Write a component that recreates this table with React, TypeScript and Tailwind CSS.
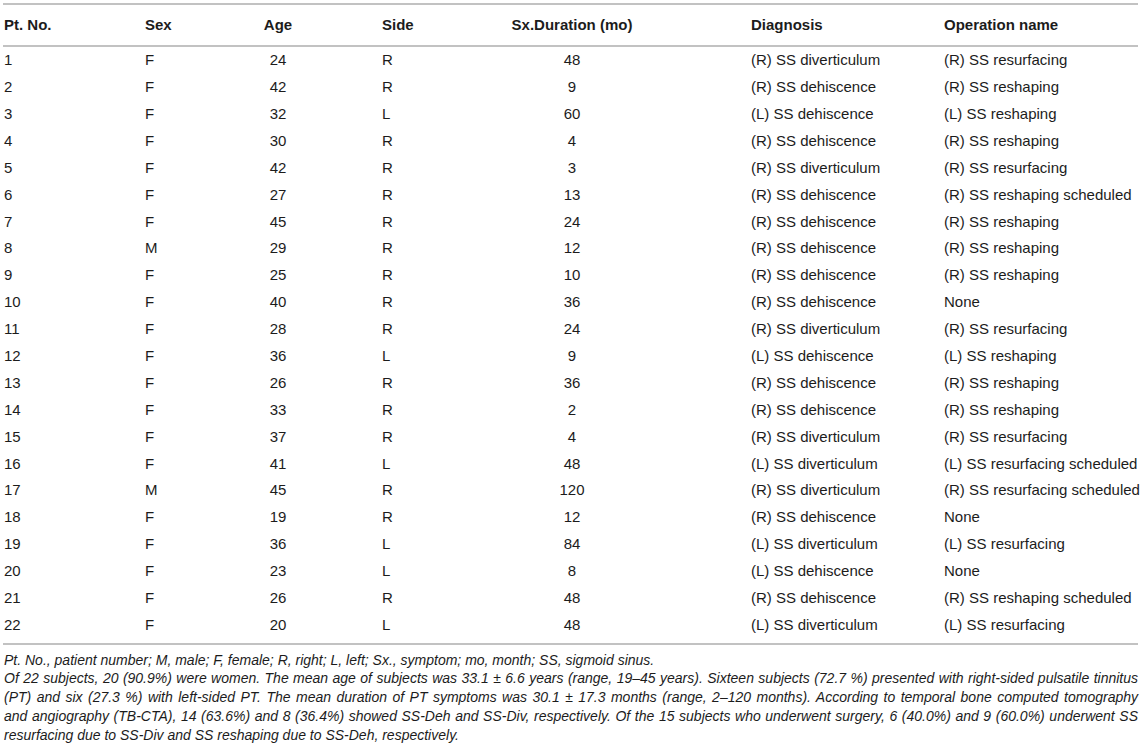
const rows: [string, string, string, string, string, string, string][] = [
  ["1", "F", "24", "R", "48", "(R) SS diverticulum", "(R) SS resurfacing"],
  ["2", "F", "42", "R", "9", "(R) SS dehiscence", "(R) SS reshaping"],
  ["3", "F", "32", "L", "60", "(L) SS dehiscence", "(L) SS reshaping"],
  ["4", "F", "30", "R", "4", "(R) SS dehiscence", "(R) SS reshaping"],
  ["5", "F", "42", "R", "3", "(R) SS diverticulum", "(R) SS resurfacing"],
  ["6", "F", "27", "R", "13", "(R) SS dehiscence", "(R) SS reshaping scheduled"],
  ["7", "F", "45", "R", "24", "(R) SS dehiscence", "(R) SS reshaping"],
  ["8", "M", "29", "R", "12", "(R) SS dehiscence", "(R) SS reshaping"],
  ["9", "F", "25", "R", "10", "(R) SS dehiscence", "(R) SS reshaping"],
  ["10", "F", "40", "R", "36", "(R) SS dehiscence", "None"],
  ["11", "F", "28", "R", "24", "(R) SS diverticulum", "(R) SS resurfacing"],
  ["12", "F", "36", "L", "9", "(L) SS dehiscence", "(L) SS reshaping"],
  ["13", "F", "26", "R", "36", "(R) SS dehiscence", "(R) SS reshaping"],
  ["14", "F", "33", "R", "2", "(R) SS dehiscence", "(R) SS reshaping"],
  ["15", "F", "37", "R", "4", "(R) SS diverticulum", "(R) SS resurfacing"],
  ["16", "F", "41", "L", "48", "(L) SS diverticulum", "(L) SS resurfacing scheduled"],
  ["17", "M", "45", "R", "120", "(R) SS diverticulum", "(R) SS resurfacing scheduled"],
  ["18", "F", "19", "R", "12", "(R) SS dehiscence", "None"],
  ["19", "F", "36", "L", "84", "(L) SS diverticulum", "(L) SS resurfacing"],
  ["20", "F", "23", "L", "8", "(L) SS dehiscence", "None"],
  ["21", "F", "26", "R", "48", "(R) SS dehiscence", "(R) SS reshaping scheduled"],
  ["22", "F", "20", "L", "48", "(L) SS diverticulum", "(L) SS resurfacing"],
];

// footnote lines as they break in the source
const noteLines = [
  "Of 22 subjects, 20 (90.9%) were women. The mean age of subjects was 33.1 ± 6.6 years (range, 19–45 years). Sixteen subjects (72.7 %) presented with right-sided pulsatile tinnitus",
  "(PT) and six (27.3 %) with left-sided PT. The mean duration of PT symptoms was 30.1 ± 17.3 months (range, 2–120 months). According to temporal bone computed tomography",
  "and angiography (TB-CTA), 14 (63.6%) and 8 (36.4%) showed SS-Deh and SS-Div, respectively. Of the 15 subjects who underwent surgery, 6 (40.0%) and 9 (60.0%) underwent SS",
];

const cols = "grid grid-cols-[142px_29px_208px_32px_316px_214px_1fr] items-center";

const Row = ({ cells, head }: { cells: string[]; head?: boolean }) => (
  <div className={`${cols} ${head ? "h-[40px] font-bold" : "h-[26.9px]"} whitespace-nowrap`}>
    <div className="pl-px">{cells[0]}</div>
    <div>{cells[1]}</div>
    <div className="text-center">{cells[2]}</div>
    <div>{cells[3]}</div>
    <div className="text-center">{cells[4]}</div>
    <div className="pl-[21px]">{cells[5]}</div>
    <div>{cells[6]}</div>
  </div>
);

export default function App() {
  return (
    <div className="w-[1145px] h-[753px] bg-white px-[3px] pt-[3px] text-[#1c1c1c] font-['Liberation_Sans',Arial,sans-serif] overflow-hidden">
      <div className="w-[1135px] text-[15px]">
        <div className="border-t-2 border-b-2 border-[#c2c2c2]">
          <Row head cells={["Pt. No.", "Sex", "Age", "Side", "Sx.Duration (mo)", "Diagnosis", "Operation name"]} />
        </div>
        <div className="pb-[4px] border-b-2 border-[#c2c2c2]">
          {rows.map((r) => (
            <Row key={r[0]} cells={r} />
          ))}
        </div>
        <div className="pt-[6px] italic text-[14px] leading-[18.75px] pl-px">
          <p>Pt. No., patient number; M, male; F, female; R, right; L, left; Sx., symptom; mo, month; SS, sigmoid sinus.</p>
          {noteLines.map((l) => (
            <p key={l} className="whitespace-nowrap text-justify [text-align-last:justify]">
              {l}
            </p>
          ))}
          <p>resurfacing due to SS-Div and SS reshaping due to SS-Deh, respectively.</p>
        </div>
      </div>
    </div>
  );
}
